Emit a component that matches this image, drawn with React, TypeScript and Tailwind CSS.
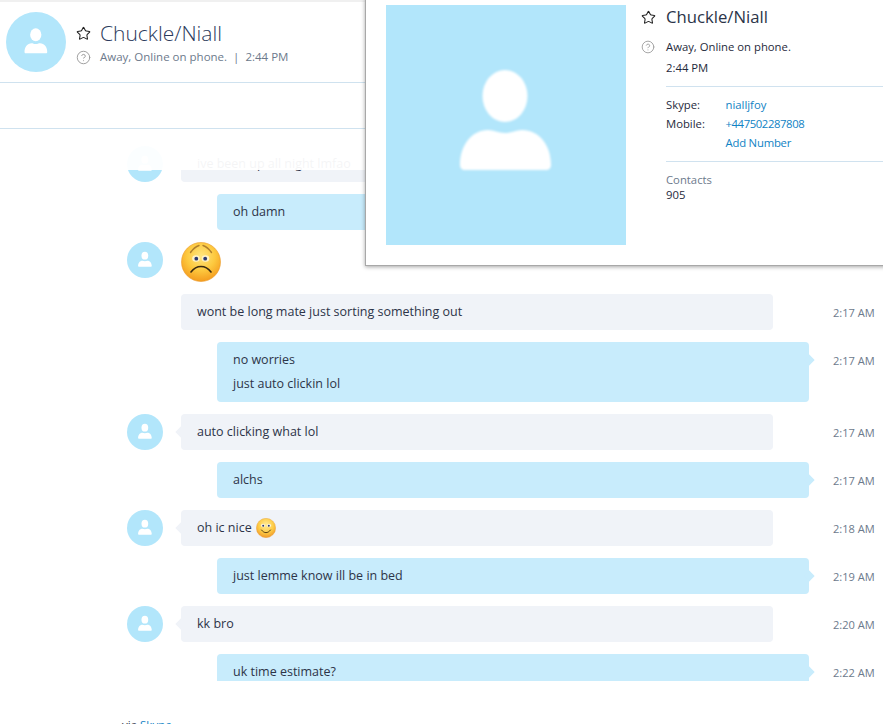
import { Star, CircleHelp } from "lucide-react";

function Person({ className }: { className: string }) {
  return (
    <svg viewBox="0 0 240 240" className={className}>
      <ellipse cx="119" cy="91" rx="22.5" ry="26" fill="#fff" />
      <path d="M74 160c0-20 12-35 28-35 6 0 10 3 17 3s11-3 17-3c17 0 29 15 29 35 0 3-2 5-5 5H79c-3 0-5-2-5-5z" fill="#fff" />
    </svg>
  );
}

function Avatar() {
  return (
    <div className="w-9 h-9 rounded-full bg-[#b2e6fb] overflow-hidden shrink-0">
      <Person className="w-9 h-9" />
    </div>
  );
}

function Sad() {
  return (
    <svg viewBox="0 0 40 40" className="w-10 h-10">
      <defs>
        <radialGradient id="sadg" cx="50%" cy="35%" r="65%">
          <stop offset="0%" stopColor="#ffe680" />
          <stop offset="55%" stopColor="#fdc93f" />
          <stop offset="100%" stopColor="#f49c1e" />
        </radialGradient>
      </defs>
      <circle cx="20" cy="20" r="19.5" fill="url(#sadg)" stroke="#eb9a2a" strokeWidth="0.6" />
      <path d="M9.500 10.500c2.500-3.500 5.500-6 8.500-7M30.500 10.500c-2.500-3.500-5.500-6-8.500-7" fill="none" stroke="#b07f2c" strokeWidth="1.400" strokeLinecap="round" />
      <ellipse cx="15" cy="16.500" rx="3.800" ry="3.300" fill="#fff3c8" />
      <ellipse cx="24.500" cy="16.500" rx="3.800" ry="3.300" fill="#fff3c8" />
      <circle cx="15.300" cy="16.700" r="1.900" fill="#2d3a70" />
      <circle cx="24.200" cy="16.700" r="1.900" fill="#2d3a70" />
      <path d="M10 30c3-4 6.500-5.500 10-5.500s7 1.500 10 5.500" fill="none" stroke="#3a2a10" strokeWidth="1.600" strokeLinecap="round" />
    </svg>
  );
}

function Smile() {
  return (
    <svg viewBox="0 0 20 20" className="w-5 h-5 inline-block align-middle ml-[1px] -mt-[2px]">
      <defs>
        <radialGradient id="smg" cx="50%" cy="35%" r="65%">
          <stop offset="0%" stopColor="#ffec9a" />
          <stop offset="60%" stopColor="#fdcb45" />
          <stop offset="100%" stopColor="#f0982a" />
        </radialGradient>
      </defs>
      <circle cx="10" cy="10" r="9.700" fill="url(#smg)" stroke="#e9a03a" strokeWidth="0.4" />
      <ellipse cx="7" cy="7.500" rx="2.100" ry="1.800" fill="#fff6d8" />
      <ellipse cx="13" cy="7.500" rx="2.100" ry="1.800" fill="#fff6d8" />
      <circle cx="7.200" cy="7.700" r="1" fill="#2d3a70" />
      <circle cx="12.800" cy="7.700" r="1" fill="#2d3a70" />
      <path d="M5.500 12c1.500 2 3 2.600 4.500 2.600s3-.6 4.500-2.600" fill="none" stroke="#4a3210" strokeWidth="0.900" strokeLinecap="round" />
    </svg>
  );
}

function Time({ t }: { t: string }) {
  return <div className="absolute left-[833px] top-[11px] text-[11.100px] leading-4 text-[#6d7a8c] whitespace-nowrap">{t}</div>;
}

function In({ children, t, noAvatar }: { children: React.ReactNode; t?: string; noAvatar?: boolean }) {
  return (
    <div className="relative flex items-start gap-[18px] pl-[127px] w-full">
      {noAvatar ? <div className="w-9 h-9 shrink-0" /> : <Avatar />}
      <div className="relative w-[592px] min-h-9 rounded bg-[#f0f3f8] px-4 py-[7px] leading-[22px]">
        {!noAvatar && <div className="absolute left-[-4px] top-[14px] w-2 h-2 rotate-45 bg-[#f0f3f8]" />}
        <span className="relative">{children}</span>
      </div>
      {t && <Time t={t} />}
    </div>
  );
}

function Out({ lines, t }: { lines: string[]; t?: string }) {
  return (
    <div className="relative pl-[217px] w-full">
      <div className="relative w-[592px] min-h-9 rounded bg-[#c8ecfc] px-4 py-[7px] leading-[22px] flex flex-col gap-[2px]">
        <div className="absolute right-[-4px] top-[14px] w-2 h-2 rotate-45 bg-[#c8ecfc]" />
        {lines.map((l) => (
          <span key={l} className="relative">{l}</span>
        ))}
      </div>
      {t && <Time t={t} />}
    </div>
  );
}

export default function App() {
  return (
    <div className="relative w-[883px] h-[724px] overflow-hidden bg-white text-[12.500px] text-[#2d3448] font-['Open_Sans',sans-serif]">
      <div className="h-[2px] bg-[#f0f0f0]" />
      <header className="h-[81px] border-b border-[#cfe2ef] flex items-start pt-[10px] pl-[6px]">
        <div className="w-[60px] h-[60px] rounded-full bg-[#b2e6fb] overflow-hidden shrink-0">
          <Person className="w-[60px] h-[60px]" />
        </div>
        <div className="ml-[10px]">
          <div className="flex items-center h-[32px] mt-[5px]">
            <Star className="w-[15px] h-[15px] text-[#222]" strokeWidth={1.700} />
            <span className="ml-[9px] text-[21px] font-light text-[#2b3a5c] leading-none">Chuckle/Niall</span>
          </div>
          <div className="flex items-center h-[18px] -mt-[1px] text-[11.500px] text-[#6d7a8c]">
            <CircleHelp className="w-[15px] h-[15px] text-[#9a9a9a]" strokeWidth={1.500} />
            <span className="ml-[9px]">Away, Online on phone.</span>
            <span className="mx-[6px]">|</span>
            <span>2:44 PM</span>
          </div>
        </div>
      </header>
      <div className="h-[46px] border-b border-[#cfe2ef]" />

      <div className="relative h-[552px] overflow-hidden pt-[17px] flex flex-col gap-3">
        <In>ive been up all night lmfao</In>
        <Out lines={["oh damn"]} />
        <div className="flex items-start gap-[18px] pl-[127px]">
          <Avatar />
          <Sad />
        </div>
        <In t="2:17 AM" noAvatar>wont be long mate just sorting something out</In>
        <Out lines={["no worries", "just auto clickin lol"]} t="2:17 AM" />
        <In t="2:17 AM">auto clicking what lol</In>
        <Out lines={["alchs"]} t="2:17 AM" />
        <In t="2:18 AM">
          oh ic nice <Smile />
        </In>
        <Out lines={["just lemme know ill be in bed"]} t="2:19 AM" />
        <In t="2:20 AM">kk bro</In>
        <Out lines={["uk time estimate?"]} t="2:22 AM" />
        <div className="absolute left-0 right-0 top-0 h-[41px] bg-white/95" />
      </div>

      <div className="pl-[122px] pt-[36px] text-[11.500px] leading-4 text-[#2d3448]">
        via <span className="text-[#0f82c4]">Skype</span>
      </div>

      <aside className="absolute left-[365px] top-[-2px] w-[540px] h-[268px] bg-white border border-[#a8a8a8] shadow-[0_1px_4px_rgba(0,0,0,0.35)] flex pl-5 pt-[6px] text-[11.300px] text-[#1f2a3c]">
        <div className="w-[240px] h-[240px] bg-[#b2e6fb] shrink-0 overflow-hidden">
          <Person className="w-[240px] h-[240px] blur-[1px]" />
        </div>
        <div className="ml-[15px] w-[250px]">
          <div className="flex items-center h-[24px]">
            <Star className="w-[15px] h-[15px] text-[#222]" strokeWidth={1.700} />
            <span className="ml-[10px] text-[16.700px] text-[#2b3448] leading-none">Chuckle/Niall</span>
          </div>
          <div className="flex items-center h-[20px] mt-[8px]">
            <CircleHelp className="w-[14px] h-[14px] text-[#9a9a9a]" strokeWidth={1.500} />
            <span className="ml-[11px]">Away, Online on phone.</span>
          </div>
          <div className="ml-[25px] leading-[20px] h-[20px] mt-[1px]">2:44 PM</div>
          <div className="ml-[25px] border-t border-[#d0e2ef] mt-[8px] pt-[8px]">
            <div className="grid grid-cols-[59.500px_1fr] leading-[19px]">
              <span>Skype:</span>
              <span className="text-[#0f82c4]">nialljfoy</span>
              <span>Mobile:</span>
              <span className="text-[#0f82c4] tracking-[-0.4px]">+447502287808</span>
              <span />
              <span className="text-[#0f82c4] tracking-[-0.2px]">Add Number</span>
            </div>
          </div>
          <div className="ml-[25px] border-t border-[#d0e2ef] mt-[9px] pt-[10px] leading-[15px]">
            <div className="text-[#6d7a8c]">Contacts</div>
            <div>905</div>
          </div>
        </div>
      </aside>
    </div>
  );
}
